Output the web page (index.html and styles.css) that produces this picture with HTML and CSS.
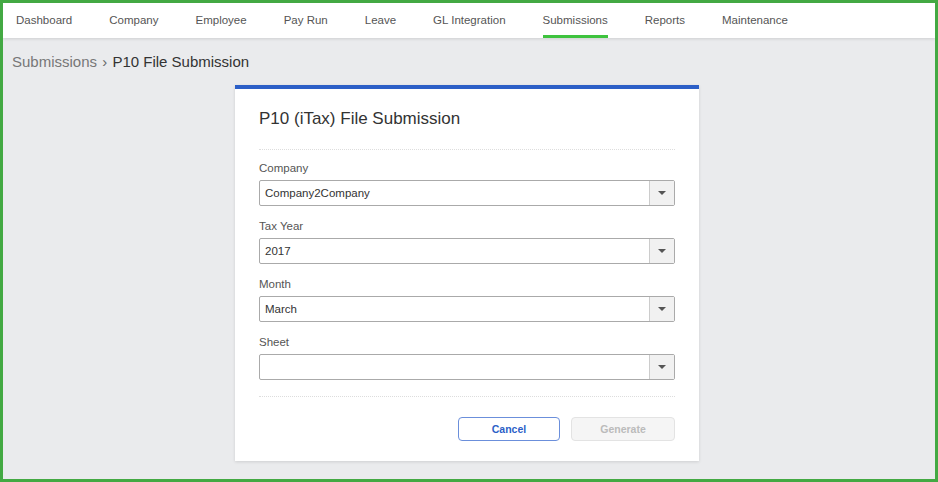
FILE: index.html
```html
<!DOCTYPE html>
<html lang="en">
<head>
    <meta charset="UTF-8">
    <meta name="viewport" content="width=device-width, initial-scale=1.0">
    <title>P10 File Submission</title>
    <link rel="stylesheet" href="styles.css">
</head>
<body>
<div class="frame">
    <!-- Top menu -->
    <nav class="topnav">
        <a href="#">Dashboard</a>
        <a href="#">Company</a>
        <a href="#">Employee</a>
        <a href="#">Pay Run</a>
        <a href="#">Leave</a>
        <a href="#">GL Integration</a>
        <a href="#" class="active">Submissions</a>
        <a href="#">Reports</a>
        <a href="#">Maintenance</a>
    </nav>

    <div class="breadcrumb">
        <span class="crumb-parent">Submissions</span>
        <span class="crumb-sep">›</span>
        <span class="crumb-current">P10 File Submission</span>
    </div>

    <!-- Form card -->
    <div class="card">
        <h2>P10 (iTax) File Submission</h2>

        <div class="field">
            <label>Company</label>
            <div class="select">
                <span class="select-value">Company2Company</span>
                <span class="select-arrow"></span>
            </div>
        </div>

        <div class="field">
            <label>Tax Year</label>
            <div class="select">
                <span class="select-value">2017</span>
                <span class="select-arrow"></span>
            </div>
        </div>

        <div class="field">
            <label>Month</label>
            <div class="select">
                <span class="select-value">March</span>
                <span class="select-arrow"></span>
            </div>
        </div>

        <div class="field">
            <label>Sheet</label>
            <div class="select">
                <span class="select-value"></span>
                <span class="select-arrow"></span>
            </div>
        </div>

        <div class="actions">
            <button class="btn btn-cancel">Cancel</button>
            <button class="btn btn-disabled" disabled>Generate</button>
        </div>
    </div>
</div>
</body>
</html>
```

FILE: styles.css
```css
html, body {
    margin: 0;
    padding: 0;
}

body {
    font-family: 'Liberation Sans', Arial, sans-serif;
    color: #333;
}

/* Outer green frame */
.frame {
    box-sizing: border-box;
    width: 938px;
    height: 482px;
    border: 3px solid #43a943;
    background: #eaebed;
    overflow: hidden;
}

/* Top menu */
.topnav {
    display: flex;
    gap: 37px;
    height: 35px;
    padding-left: 13px;
    background: #fff;
    box-shadow: 0 1px 3px rgba(0, 0, 0, 0.12);
}

.topnav a {
    display: flex;
    align-items: center;
    box-sizing: border-box;
    height: 35px;
    padding-top: 1px;
    font-size: 11.5px;
    color: #555;
    text-decoration: none;
    border-bottom: 3px solid transparent;
}

.topnav a.active {
    border-bottom-color: #3ec33e;
}

/* Breadcrumb */
.breadcrumb {
    padding: 15px 0 0 9px;
    height: 34px;
    box-sizing: border-box;
    font-size: 15px;
}

.crumb-parent {
    color: #777;
}

.crumb-sep {
    color: #666;
    margin: 0 1px;
}

.crumb-current {
    color: #333;
}

/* Card */
.card {
    width: 464px;
    box-sizing: border-box;
    margin: 13px 0 0 232px;
    background: #fff;
    border-top: 4px solid #2c5fc7;
    padding: 0 24px 20px;
    box-shadow: 0 1px 3px rgba(0, 0, 0, 0.12);
}

.card h2 {
    margin: 0;
    padding: 20px 0 20px;
    font-size: 17px;
    font-weight: normal;
    color: #333;
    border-bottom: 1px dotted #ddd;
}

.field {
    padding-top: 11px;
}

.field + .field {
    padding-top: 13px;
}

.field label {
    display: block;
    font-size: 11.5px;
    line-height: 14px;
    color: #555;
    margin-bottom: 5px;
}

.select {
    display: flex;
    height: 26px;
    box-sizing: border-box;
    border: 1px solid #aaa;
    border-radius: 2px;
}

.select-value {
    flex: 1;
    padding-left: 5px;
    font-size: 11.5px;
    line-height: 24px;
    color: #333;
}

.select-arrow {
    width: 24px;
    border-left: 1px solid #ccc;
    background: #f1f1f1;
    position: relative;
}

.select-arrow::after {
    content: "";
    position: absolute;
    left: 8px;
    top: 10px;
    border-left: 4px solid transparent;
    border-right: 4px solid transparent;
    border-top: 4px solid #555;
}

.actions {
    display: flex;
    justify-content: flex-end;
    gap: 11px;
    margin-top: 16px;
    padding-top: 20px;
    border-top: 1px dotted #ddd;
}

.btn {
    width: 104px;
    height: 24px;
    font-family: inherit;
    font-size: 10.5px;
    font-weight: bold;
    border-radius: 4px;
    cursor: pointer;
}

.btn-cancel {
    width: 102px;
    background: #fff;
    color: #2c5fc7;
    border: 1px solid #6b8fdb;
}

.btn-disabled {
    background: #f5f5f5;
    color: #bbb;
    border: 1px solid #e3e3e3;
    cursor: default;
}
```
